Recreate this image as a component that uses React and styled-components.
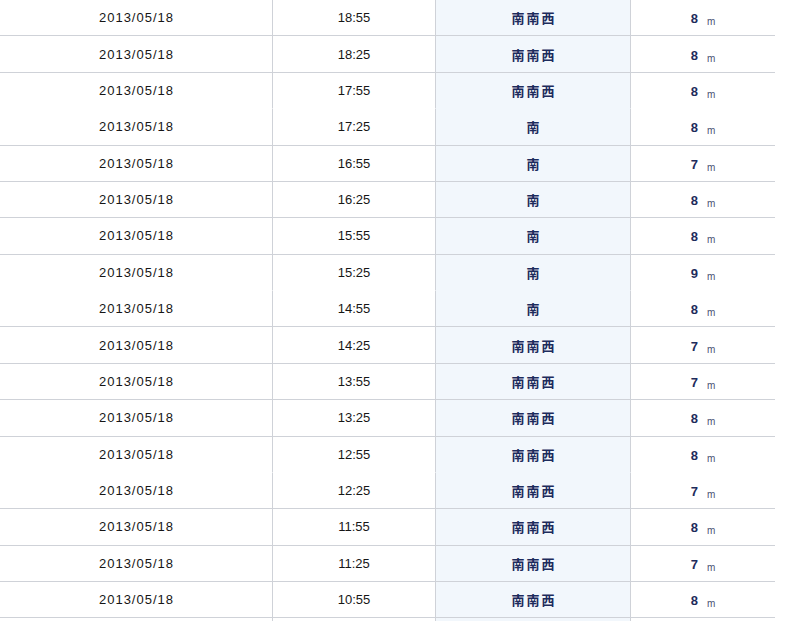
import React from 'react'
import styled, { createGlobalStyle } from 'styled-components'

const GlobalStyle = createGlobalStyle`
  html, body {
    margin: 0;
    padding: 0;
    background: #ffffff;
    overflow: hidden;
  }
`

const Table = styled.div`
  width: 775px;
  display: flex;
  flex-direction: column;
`

const Row = styled.div`
  display: grid;
  grid-template-columns: 273px 163px 195px 144px;
  height: 36.375px;
`

const Cell = styled.div`
  box-sizing: border-box;
  display: flex;
  align-items: center;
  justify-content: center;
  border-bottom: 1px solid ${props => props.joined ? 'transparent' : '#cfd2d8'};
  border-right: ${props => props.last ? 'none' : '1px solid #cfd2d8'};
  background: ${props => props.shaded ? '#f2f7fc' : '#ffffff'};
`

const DateText = styled.span`
  font-family: "Liberation Sans", Arial, sans-serif;
  font-size: 13px;
  letter-spacing: 1px;
  color: #161616;
  padding-left: 1px;
`

const TimeText = styled.span`
  font-family: "Liberation Sans", Arial, sans-serif;
  font-size: 13px;
  color: #161616;
`

const DirText = styled.span`
  font-family: "Noto Sans CJK JP", "Noto Sans", sans-serif;
  font-size: 13px;
  font-weight: 700;
  letter-spacing: 2px;
  padding-left: 2px;
  color: #1d2b5c;
`

const Speed = styled.span`
  display: flex;
  align-items: baseline;
  gap: 9px;
  padding-top: 2px;
`

const SpeedValue = styled.span`
  font-family: "Liberation Sans", Arial, sans-serif;
  font-size: 13px;
  font-weight: 700;
  color: #1d2b5c;
`

const Unit = styled.span`
  font-family: "Liberation Sans", Arial, sans-serif;
  font-size: 10px;
  color: #4a5275;
  transform: translateY(2px);
`

// rows where the separator below is missing are flagged as joined
const rows = [
  ['18:55', '南南西', 8],
  ['18:25', '南南西', 8],
  ['17:55', '南南西', 8, true],
  ['17:25', '南', 8],
  ['16:55', '南', 7],
  ['16:25', '南', 8],
  ['15:55', '南', 8],
  ['15:25', '南', 9, true],
  ['14:55', '南', 8],
  ['14:25', '南南西', 7],
  ['13:55', '南南西', 7],
  ['13:25', '南南西', 8],
  ['12:55', '南南西', 8, true],
  ['12:25', '南南西', 7],
  ['11:55', '南南西', 8],
  ['11:25', '南南西', 7],
  ['10:55', '南南西', 8],
]

export default function App() {
  return (
    <>
      <GlobalStyle />
      <Table>
        {rows.map(([time, dir, speed, joined]) => (
          <Row key={time}>
            <Cell joined={joined}>
              <DateText>2013/05/18</DateText>
            </Cell>
            <Cell joined={joined}>
              <TimeText>{time}</TimeText>
            </Cell>
            <Cell joined={joined} shaded>
              <DirText>{dir}</DirText>
            </Cell>
            <Cell joined={joined} last>
              <Speed>
                <SpeedValue>{speed}</SpeedValue>
                <Unit>m</Unit>
              </Speed>
            </Cell>
          </Row>
        ))}
        <Row>
          <Cell />
          <Cell />
          <Cell shaded />
          <Cell last />
        </Row>
      </Table>
    </>
  )
}
